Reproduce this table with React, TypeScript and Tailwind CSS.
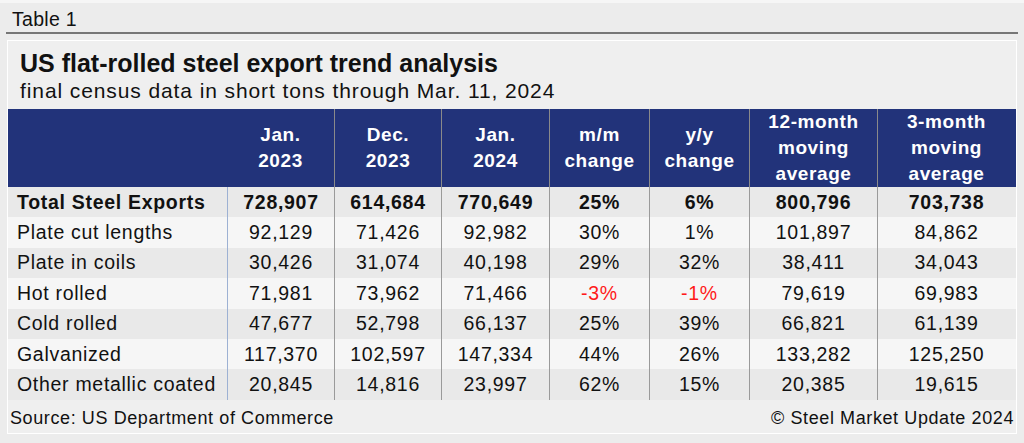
const cols = "grid grid-cols-[219px_107px_107px_108px_100px_100px_128px_138px]";

const headers = [
  ["Jan.", "2023"],
  ["Dec.", "2023"],
  ["Jan.", "2024"],
  ["m/m", "change"],
  ["y/y", "change"],
  ["12-month", "moving", "average"],
  ["3-month", "moving", "average"],
];

const rows: { label: string; values: string[]; bold?: boolean }[] = [
  { label: "Total Steel Exports", values: ["728,907", "614,684", "770,649", "25%", "6%", "800,796", "703,738"], bold: true },
  { label: "Plate cut lengths", values: ["92,129", "71,426", "92,982", "30%", "1%", "101,897", "84,862"] },
  { label: "Plate in coils", values: ["30,426", "31,074", "40,198", "29%", "32%", "38,411", "34,043"] },
  { label: "Hot rolled", values: ["71,981", "73,962", "71,466", "-3%", "-1%", "79,619", "69,983"] },
  { label: "Cold rolled", values: ["47,677", "52,798", "66,137", "25%", "39%", "66,821", "61,139"] },
  { label: "Galvanized", values: ["117,370", "102,597", "147,334", "44%", "26%", "133,282", "125,250"] },
  { label: "Other metallic coated", values: ["20,845", "14,816", "23,997", "62%", "15%", "20,385", "19,615"] },
];

export default function App() {
  return (
    <div className="w-[1024px] h-[443px] bg-[#ececec] border-t-[3px] border-[#f6f6f6] text-[#111] font-['Liberation_Sans',Arial,sans-serif] overflow-hidden">
      <div className="pl-[12px] pt-[3px] h-[29px] text-[19.5px] tracking-[0.3px] leading-[26px]">Table 1</div>
      <div className="ml-[6px] w-[1012px] h-[2px] bg-[#767676]" />
      <div className="ml-[7px] mt-[6px] w-[1010px] h-[394px] border border-white bg-[#efefef] flex flex-col">
        <div className="pl-[12px] pt-[7px] h-[37px] text-[25px] font-bold leading-[30px]">
          US flat-rolled steel export trend analysis
        </div>
        <div className="pl-[12px] h-[31px] text-[21px] tracking-[0.9px] leading-[26px]">
          final census data in short tons through Mar. 11, 2024
        </div>
        <div className={`${cols} h-[78px] bg-[#22337a] text-white font-bold text-[19px] tracking-[0.6px] leading-[26px]`}>
          <div />
          {headers.map((h, i) => (
            <div
              key={i}
              className={`flex flex-col items-center justify-center text-center ${i > 0 ? "border-l border-[#8a8a8a]" : ""}`}
            >
              {h.map((t) => (
                <span key={t}>{t}</span>
              ))}
            </div>
          ))}
        </div>
        {rows.map((r, ri) => (
          <div
            key={r.label}
            className={`${cols} h-[30.4px] text-[19.5px] tracking-[0.7px] ${r.bold ? "font-bold" : ""} ${ri % 2 === 0 ? "bg-[#e9e9e9]" : "bg-[#f6f6f6]"}`}
          >
            <div className="pl-[9px] flex items-center whitespace-nowrap">{r.label}</div>
            {r.values.map((v, i) => (
              <div
                key={i}
                className={`flex items-center justify-center border-l ${i === 0 ? "border-[#9db1d3]" : "border-[#9a9a9a]"} ${v.startsWith("-") ? "text-[#ff1a1a]" : ""}`}
              >
                {v}
              </div>
            ))}
          </div>
        ))}
        <div className="flex-1 flex items-center justify-between px-[2px] pt-[5px] text-[18px] tracking-[0.6px]">
          <span>Source: US Department of Commerce</span>
          <span>© Steel Market Update 2024</span>
        </div>
      </div>
    </div>
  );
}
